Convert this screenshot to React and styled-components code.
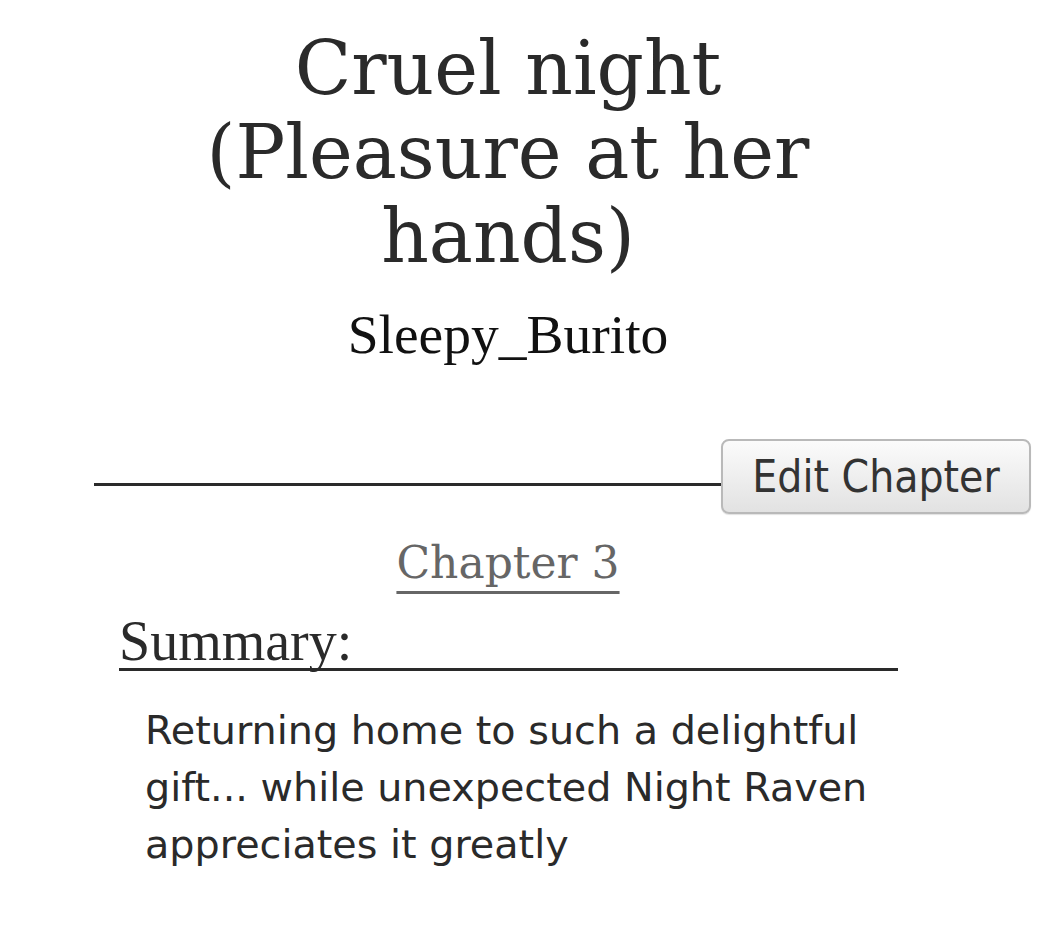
import styled, { createGlobalStyle } from "styled-components";

const GlobalStyle = createGlobalStyle`
  html, body {
    margin: 0;
    padding: 0;
    background: #ffffff;
  }
  body {
    width: 1040px;
    color: #2a2a2a;
  }
`;

const Page = styled.div`
  width: 1040px;
  min-height: 936px;
  padding-top: 26px;
  box-sizing: border-box;
`;

const Header = styled.header`
  width: 1016px;
  text-align: center;
`;

const Title = styled.h1`
  margin: 0 auto;
  width: 640px;
  font-family: "DejaVu Serif", Georgia, serif;
  font-weight: normal;
  font-size: 74px;
  line-height: 84px;
  color: #2a2a2a;
`;

const Author = styled.div`
  margin-top: 25px;
  font-family: "Liberation Serif", "Times New Roman", serif;
  font-size: 55.5px;
  line-height: 64px;
  color: #111;
`;

const ToolRow = styled.div`
  margin-top: 72px;
  padding: 0 9px 0 94px;
  display: flex;
  align-items: flex-end;
`;

const Rule = styled.div`
  flex: 1;
  height: 3px;
  background: #2a2a2a;
  margin-bottom: 28px;
`;

const EditButton = styled.button`
  width: 310px;
  height: 75px;
  border: 2px solid #b9b9b9;
  border-radius: 8px;
  background: linear-gradient(#fbfbfb, #e2e2e2);
  box-shadow: 0 1px 1px rgba(0, 0, 0, 0.12);
  font-family: "DejaVu Sans Condensed", "DejaVu Sans", Verdana, sans-serif;
  font-size: 44px;
  color: #333;
  padding: 0;
  cursor: pointer;
`;

const ChapterLine = styled.div`
  width: 1016px;
  margin-top: 23px;
  text-align: center;
`;

const ChapterLink = styled.a`
  font-family: "DejaVu Serif", Georgia, serif;
  font-size: 44px;
  line-height: 52px;
  color: #666;
  text-decoration: underline;
  text-decoration-thickness: 3px;
  text-underline-offset: 13px;
`;

const SummaryBlock = styled.section`
  margin: 25px 0 0 119px;
  width: 779px;
`;

const SummaryHeading = styled.h2`
  margin: 0;
  font-family: "Liberation Serif", "Times New Roman", serif;
  font-weight: normal;
  font-size: 56px;
  line-height: 54px;
  color: #2a2a2a;
  border-bottom: 3px solid #2a2a2a;
`;

const SummaryText = styled.p`
  margin: 31px 0 0 26px;
  width: 753px;
  font-family: "DejaVu Sans", Verdana, sans-serif;
  font-size: 39.7px;
  line-height: 57px;
  color: #2a2a2a;
`;

export default function App() {
  return (
    <>
      <GlobalStyle />
      <Page>
        <Header>
          <Title>Cruel night (Pleasure at her hands)</Title>
          <Author>Sleepy_Burito</Author>
        </Header>
        <ToolRow>
          <Rule />
          <EditButton>Edit Chapter</EditButton>
        </ToolRow>
        <ChapterLine>
          <ChapterLink href="#">Chapter 3</ChapterLink>
        </ChapterLine>
        <SummaryBlock>
          <SummaryHeading>Summary:</SummaryHeading>
          <SummaryText>
            Returning home to such a delightful gift... while unexpected Night
            Raven appreciates it greatly
          </SummaryText>
        </SummaryBlock>
      </Page>
    </>
  );
}
